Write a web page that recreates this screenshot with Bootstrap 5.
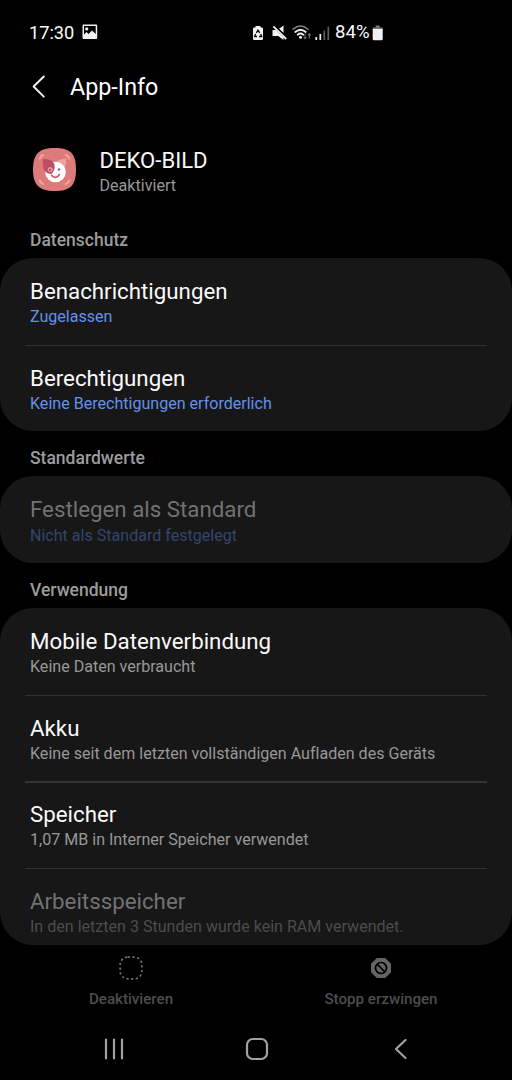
<!DOCTYPE html>
<html lang="de" data-bs-theme="dark">
<head>
<meta charset="utf-8">
<meta name="viewport" content="width=device-width, initial-scale=1">
<title>App-Info</title>
<link href="https://cdn.jsdelivr.net/npm/bootstrap@5.3.0/dist/css/bootstrap.min.css" rel="stylesheet">
<style>
  body { background: #000; color: #fafafa; font-family: Roboto, "Liberation Sans", sans-serif; font-variant-ligatures: none; height: 1080px; overflow: hidden; }
  svg { display: block; flex: none; }
  .statusbar { height: 62px; padding: 3px 0 0 29px; font-size: 18.6px; }
  .status-left { width: 223px; }
  .clock { font-size: 18.2px; width: 45.5px; }
  .percent { margin-left: 5px; padding-top: 1px; }
  .appbar { height: 50px; padding-left: 30px; }
  .appbar h1 { font-size: 23.3px; font-weight: 400; margin: 2px 0 0 23px; }
  .app-head { height: 115px; padding: 33px 30px 0 32px; }
  .app-name { font-size: 22.1px; line-height: 26px; }
  .app-state { font-size: 16.1px; line-height: 25px; color: #979797; }
  .app-text { margin: 2px 0 0 22.5px; }
  .section-title { font-size: 17.5px; font-weight: 500; line-height: 24px; color: #9c9c9c; padding: 15px 30px 0; height: 45.1px; margin: 0; }
  .section-title.first { height: 31px; padding-top: 1px; }
  .panel { background: #171717; border-radius: 33px; }
  .entry { background: transparent; border: 0; height: 86.6px; padding: 20.2px 30px 0; position: relative; color: #fafafa; }
  .entry + .entry::before { content: ""; position: absolute; left: 25px; right: 25px; top: 0; height: 1.5px; background: #343434; }
  .entry.cut { height: 77.2px; }
  .entry-title { font-size: 22.3px; line-height: 26px; white-space: nowrap; }
  .entry-sub { font-size: 16.07px; line-height: 24px; margin-top: 1.1px; color: #979797; white-space: nowrap; }
  .entry-sub.linked { color: #6491ec; }
  .entry.off .entry-title { color: #727272; }
  .entry.off .entry-sub { color: #4c4c4c; }
  .entry.off .entry-sub.linked { color: #33466e; }
  .actions { height: 73px; padding: 10px 6px 0; color: #4d4d4d; font-size: 15.15px; font-weight: 500; }
  .actions .btn-label { line-height: 20px; margin-top: 8px; }
  .sysnav { height: 62px; padding: 0 103px 0 104px; color: #a2a2a2; }
  .home-key { margin-right: 5px; }
</style>
</head>
<body class="d-flex flex-column">
  <header>
    <div class="statusbar d-flex align-items-center">
      <div class="status-left d-flex align-items-center">
        <span class="clock">17:30</span>
        <svg style="margin-left:7px" width="16" height="16" viewBox="0 0 16 16"><path fill="#f0f0f0" fill-rule="evenodd" d="M1.500.500h12.500q1.200 0 1.200 1.200v12.100q0 1.200-1.200 1.200H1.500Q.5 15 .5 13.800V1.700Q.5.500 1.500.500ZM2 2v8.500L4.500 8l2 2L10 6.500l3.700 3.500V2ZM4.700 3.300a1.600 1.600 0 1 1 0 3.200a1.600 1.600 0 0 1 0-3.200Z"/></svg>
      </div>
      <svg width="12" height="16" viewBox="0 0 12 16"><path fill="#f2f2f2" d="M3.500 1h5v1.500h1.300q1.200 0 1.200 1.200v10.100q0 1.200-1.200 1.200H2.200Q1 15 1 13.800V3.700Q1 2.500 2.200 2.500h1.300Z"/><path d="M4.300 7.800 6 5.200l1.700 2.600M8.700 9l1 2.500H7M5 11.500H2.600L3.600 9" fill="none" stroke="#000" stroke-width="1.300"/></svg>
      <svg style="margin-left:8px" width="16" height="16" viewBox="0 0 16 16"><path fill="#f2f2f2" d="M.5 5h3.300l7.700 7.500V15L6.200 11H.5ZM7 3.700 11.500.500v7.600Z"/><path d="M2.600.8 15.300 13" stroke="#000" stroke-width="1.200"/><path d="M1.300 1.400 14.200 14" stroke="#f2f2f2" stroke-width="1.800"/></svg>
      <svg style="margin-left:4px" width="20" height="16" viewBox="0 0 20 16"><g fill="none" stroke-linecap="round"><path d="M1 4.200Q8.500-2.200 16 4.200" stroke="#858585" stroke-width="1.500"/><path d="M3.300 7Q8.500 2.500 13.700 7M5.700 9.700Q8.500 7.300 11.300 9.700" stroke="#eee" stroke-width="1.800"/></g><circle cx="8.500" cy="12.300" r="1.500" fill="#eee"/><path d="M13 8.500v5M11.500 12l1.500 1.700 1.500-1.700M17.300 13.700v-5M15.800 10.300l1.500-1.700 1.500 1.700" fill="none" stroke="#686868" stroke-width="1.100"/></svg>
      <svg style="margin-left:3px" width="15" height="16" viewBox="0 0 15 16"><path d="M1.300 12v3M5.300 9v6" stroke="#f2f2f2" stroke-width="1.700"/><path d="M9.300 5.500V15M13.300 1.500V15" stroke="#5c5c5c" stroke-width="1.700"/></svg>
      <span class="percent">84%</span>
      <svg style="margin-left:2px" width="12" height="16" viewBox="0 0 12 16"><path fill="#777" d="M3.700.5h4v2h3v2.500H.7V2.500h3Z"/><path fill="#f2f2f2" d="M.7 4h10v10q0 1.200-1.200 1.200H1.900Q.7 15.200.7 14Z"/></svg>
    </div>
    <div class="appbar d-flex align-items-center">
      <svg width="17" height="26" viewBox="0 0 17 26"><path d="M13.800 2.500 3.600 12.500l10.200 10.200" fill="none" stroke="#f2f2f2" stroke-width="1.900" stroke-linecap="round" stroke-linejoin="round"/></svg>
      <h1>App-Info</h1>
    </div>
  </header>
  <main>
    <section class="app-head d-flex align-items-start">
      <svg style="margin-top:2px" width="45" height="45" viewBox="0 0 45 45">
        <path fill="#dd7b7b" d="M22.500 1C38 1 44 6 44 22.500S38 44 22.500 44 1 38 1 22.500 7 1 22.500 1Z"/>
        <g fill="none" stroke="#f0a9a5" stroke-width="2" stroke-linecap="round"><path d="M7.800 11.500q.8-2.700 3.400-3.500M33.800 8q2.700.8 3.400 3.500M7.800 33.500q.8 2.700 3.400 3.500M33.800 37q2.700-.8 3.400-3.500"/></g>
        <path fill="#efa39f" d="M23 16Q26 12 34 11.500q.8 5-1 9Z"/>
        <circle cx="23.500" cy="25" r="10.300" fill="#fff"/>
        <path fill="#bd4d62" d="M11 12q9-.5 11.500 5.500.8 6-3 9.500-4.500 0-7-3.500-2.500-5-1.500-11.500Z"/>
        <circle cx="18.200" cy="22.500" r="2.600" fill="#e3909a"/><circle cx="18" cy="23" r=".9" fill="#a93f56"/>
        <circle cx="27" cy="22.500" r="1.200" fill="#b24a5d"/>
        <path d="M19.500 28.300q1.500 2.200 4 2 2.700-.2 3.800-2.700" fill="none" stroke="#c4606c" stroke-width="1.700" stroke-linecap="round"/>
      </svg>
      <div class="app-text">
        <div class="app-name">DEKO-BILD</div>
        <div class="app-state">Deaktiviert</div>
      </div>
    </section>

    <h2 class="section-title first">Datenschutz</h2>
    <div class="panel list-group">
      <div class="entry list-group-item"><div class="entry-title">Benachrichtigungen</div><div class="entry-sub linked">Zugelassen</div></div>
      <div class="entry list-group-item"><div class="entry-title">Berechtigungen</div><div class="entry-sub linked">Keine Berechtigungen erforderlich</div></div>
    </div>

    <h2 class="section-title">Standardwerte</h2>
    <div class="panel list-group">
      <div class="entry off list-group-item"><div class="entry-title">Festlegen als Standard</div><div class="entry-sub linked">Nicht als Standard festgelegt</div></div>
    </div>

    <h2 class="section-title">Verwendung</h2>
    <div class="panel list-group">
      <div class="entry list-group-item"><div class="entry-title">Mobile Datenverbindung</div><div class="entry-sub">Keine Daten verbraucht</div></div>
      <div class="entry list-group-item"><div class="entry-title">Akku</div><div class="entry-sub">Keine seit dem letzten vollständigen Aufladen des Geräts</div></div>
      <div class="entry list-group-item"><div class="entry-title">Speicher</div><div class="entry-sub">1,07 MB in Interner Speicher verwendet</div></div>
      <div class="entry off cut list-group-item"><div class="entry-title">Arbeitsspeicher</div><div class="entry-sub">In den letzten 3 Stunden wurde kein RAM verwendet.</div></div>
    </div>
  </main>
  <footer>
    <div class="actions row g-0 text-center">
      <div class="col-6 d-flex flex-column align-items-center">
        <svg width="26" height="26" viewBox="0 0 26 26"><rect x="2.200" y="2.200" width="21.600" height="21.600" rx="7.500" fill="none" stroke="#717171" stroke-width="1.700" stroke-dasharray="2.200 2.500"/></svg>
        <span class="btn-label">Deaktivieren</span>
      </div>
      <div class="col-6 d-flex flex-column align-items-center">
        <svg width="26" height="26" viewBox="0 0 26 26"><path fill="#656565" d="M8.800 3h8.400L23 8.800v8.400L17.200 23H8.800L3 17.200V8.800Z"/><circle cx="13" cy="13" r="5.500" fill="none" stroke="#000" stroke-width="1.700"/><path d="m9.200 9.200 7.600 7.600" stroke="#000" stroke-width="1.700"/></svg>
        <span class="btn-label">Stopp erzwingen</span>
      </div>
    </div>
    <div class="sysnav d-flex align-items-center justify-content-between">
      <svg width="22" height="22" viewBox="0 0 22 22"><path d="M2 1.500v19M10 1.500v19M18 1.500v19" stroke="currentColor" stroke-width="2.200" stroke-linecap="round"/></svg>
      <svg class="home-key" width="24" height="24" viewBox="0 0 24 24"><rect x="2" y="2" width="20" height="20" rx="5.800" fill="none" stroke="currentColor" stroke-width="2.200"/></svg>
      <svg width="16" height="24" viewBox="0 0 16 24"><path d="M12.500 3 3 12l9.500 9" fill="none" stroke="currentColor" stroke-width="2.200" stroke-linecap="round" stroke-linejoin="round"/></svg>
    </div>
  </footer>
<script src="https://cdn.jsdelivr.net/npm/bootstrap@5.3.0/dist/js/bootstrap.bundle.min.js"></script>
</body>
</html>
